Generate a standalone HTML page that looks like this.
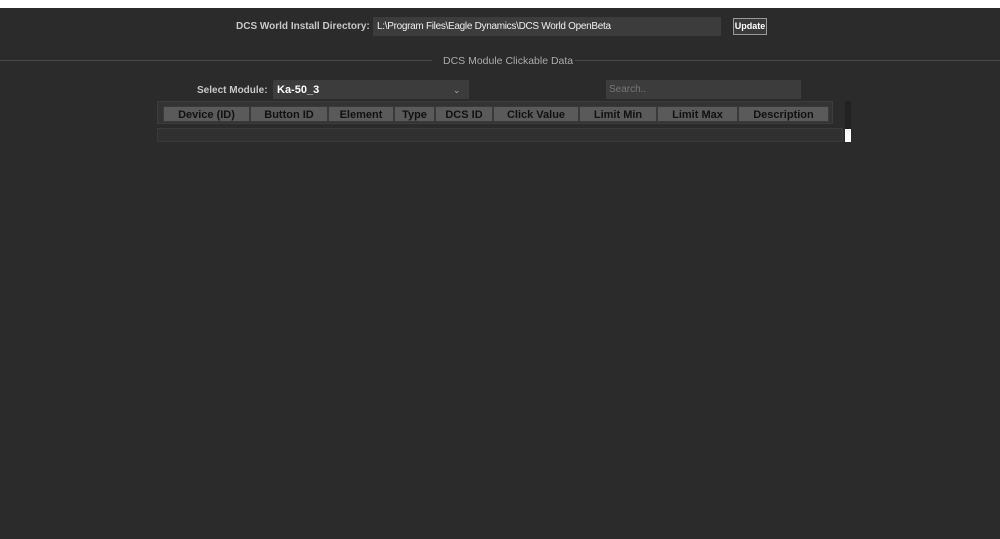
<!DOCTYPE html><html><head><style>
body{margin:0;width:1000px;height:539px;background:#2b2b2b;position:relative;overflow:hidden;font-family:"Liberation Sans",sans-serif;}
.a{position:absolute;}
.h{position:absolute;top:106px;height:16px;background:#5a5a5a;border:1px solid #3a3a3a;box-sizing:border-box;color:#111;font-size:11px;font-weight:bold;text-align:center;line-height:17px;}
</style></head><body>
<div class="a" style="left:0;top:0;width:1000px;height:8px;background:#fff"></div>
<div class="a" style="left:236px;top:21px;font-size:10px;font-weight:bold;color:#c8c8c8">DCS World Install Directory:</div>
<div class="a" style="left:373px;top:17px;width:348px;height:19px;background:#3c3c3c;color:#eee;font-size:10px;line-height:19px;padding-left:4px;box-sizing:border-box;letter-spacing:-0.3px">L:\Program Files\Eagle Dynamics\DCS World OpenBeta</div>
<div class="a" style="left:733px;top:18px;width:34px;height:17px;background:#3a3a3a;border:1px solid #999;box-sizing:border-box;color:#fff;font-size:9px;font-weight:bold;text-align:center;line-height:15px">Update</div>
<div class="a" style="left:0;top:60px;width:432px;height:1px;background:#4a4a4a"></div>
<div class="a" style="left:575px;top:60px;width:425px;height:1px;background:#4a4a4a"></div>
<div class="a" style="left:443px;top:55px;font-size:10.5px;color:#aaa">DCS Module Clickable Data</div>
<div class="a" style="left:197px;top:85px;font-size:10px;font-weight:bold;color:#c8c8c8">Select Module:</div>
<div class="a" style="left:273px;top:80px;width:196px;height:19px;background:#3c3c3c;color:#fff;font-size:11px;font-weight:bold;line-height:20px;padding-left:4px;box-sizing:border-box">Ka-50_3<span style="position:absolute;left:180px;top:0;color:#aaa;font-weight:normal;font-size:9px">&#8964;</span></div>
<div class="a" style="left:606px;top:80px;width:195px;height:19px;background:#3c3c3c;color:#777;font-size:10px;line-height:19px;padding-left:3px;box-sizing:border-box">Search..</div>
<div class="a" style="left:157px;top:101px;width:676px;height:23px;background:#333;border:1px solid #3c3c3c;box-sizing:border-box"></div>
<div class="h" style="left:163px;width:87px">Device (ID)</div>
<div class="h" style="left:250px;width:78px">Button ID</div>
<div class="h" style="left:328px;width:66px">Element</div>
<div class="h" style="left:394px;width:41px">Type</div>
<div class="h" style="left:435px;width:58px">DCS ID</div>
<div class="h" style="left:493px;width:86px">Click Value</div>
<div class="h" style="left:579px;width:78px">Limit Min</div>
<div class="h" style="left:657px;width:81px">Limit Max</div>
<div class="h" style="left:738px;width:91px">Description</div>
<div class="a" style="left:157px;top:128px;width:686px;height:14px;background:#303030;border:1px solid #3a3a3a;box-sizing:border-box"></div>
<div class="a" style="left:845px;top:101px;width:6px;height:28px;background:#222"></div>
<div class="a" style="left:845px;top:129px;width:6px;height:13px;background:#fff"></div>
</body></html>
